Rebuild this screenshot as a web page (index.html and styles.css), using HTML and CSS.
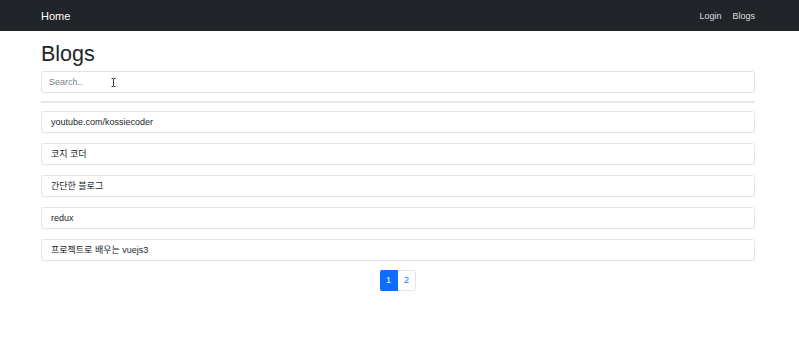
FILE: index.html
```html
<!doctype html>
<html>
	<head>
		<meta http-equiv="Content-Type" content="text/html; charset=utf-8">
		<title>Blogs</title>
		<link rel="stylesheet" href="styles.css">
	</head>
<body>

	<!--nav start-->
	<div class="nav">
		<div class="wrap nav_in">
			<a class="brand" href="#">Home</a>
			<ul class="nav_links">
				<li><a href="#">Login</a></li>
				<li><a href="#">Blogs</a></li>
			</ul>
		</div>
	</div>
	<!--end nav-->

	<!--blogs start-->
	<div class="wrap">
		<h2 class="title">Blogs</h2>
		<div class="search">
			<input type="text" class="s_text" placeholder="Search..">
			<svg class="caret" width="5" height="9" viewBox="0 0 5 9"><path d="M0.5 0.5h1.5l0.5 0.5l0.5-0.5h1.5M2.5 1v7M0.5 8.5h1.5l0.5-0.5l0.5 0.5h1.5" fill="none" stroke="#222" stroke-width="0.9"/></svg>
		</div>
		<hr class="line">
		<ul class="list">
			<li>youtube.com/kossiecoder</li>
			<li>코지 코더</li>
			<li>간단한 블로그</li>
			<li>redux</li>
			<li>프로젝트로 배우는 vuejs3</li>
		</ul>
		<ul class="pages">
			<li class="on">1</li>
			<li>2</li>
		</ul>
	</div>
	<!--end blogs-->

</body>
</html>
```

FILE: styles.css
```css
*{margin:0;padding:0;box-sizing:border-box;}
body{font-family:"Liberation Sans","Noto Sans CJK KR",Arial,sans-serif;color:#212529;background:#fff;}
ul{list-style:none;}
a{text-decoration:none;}

.wrap{width:717px;padding-right:3px;margin:0 auto;}

/*nav start*/
.nav{height:31px;background:#212529;}
.nav .nav_in{display:flex;align-items:center;justify-content:space-between;height:31px;}
.nav .brand{font-size:11px;color:#fff;}
.nav .nav_links{display:flex;}
.nav .nav_links a{display:block;font-size:9px;color:rgba(255,255,255,.85);padding:0 0 0 11px;}
/*end nav*/

/*blogs start*/
.title{font-size:21.5px;font-weight:500;line-height:26px;padding-top:10px;margin-bottom:4px;}
.search{position:relative;}
.search .s_text{display:block;width:100%;height:22px;border:1px solid #e0e3e6;border-radius:3px;padding:0 7px;font-size:9px;font-family:"Liberation Sans",Arial,sans-serif;color:#212529;outline:none;}
.search .s_text::placeholder{color:#7a8087;}
.search .caret{position:absolute;left:70px;top:7px;}
.line{border:none;border-top:2px solid #e4e6e8;margin:8px 0 8px;}
.list li{height:22px;line-height:20px;border:1px solid #e3e5e8;border-radius:3px;padding:0 9px;font-size:9px;margin-bottom:10px;}
.pages{display:flex;justify-content:center;margin-top:-1px;}
.pages li{width:18px;height:21px;line-height:19px;text-align:center;font-size:9px;color:#0d6efd;border:1px solid #e3e5e8;border-left:none;border-radius:0 2px 2px 0;}
.pages li.on{background:#0d6efd;border-color:#0d6efd;color:#fff;border-radius:2px 0 0 2px;}
/*end blogs*/
```
